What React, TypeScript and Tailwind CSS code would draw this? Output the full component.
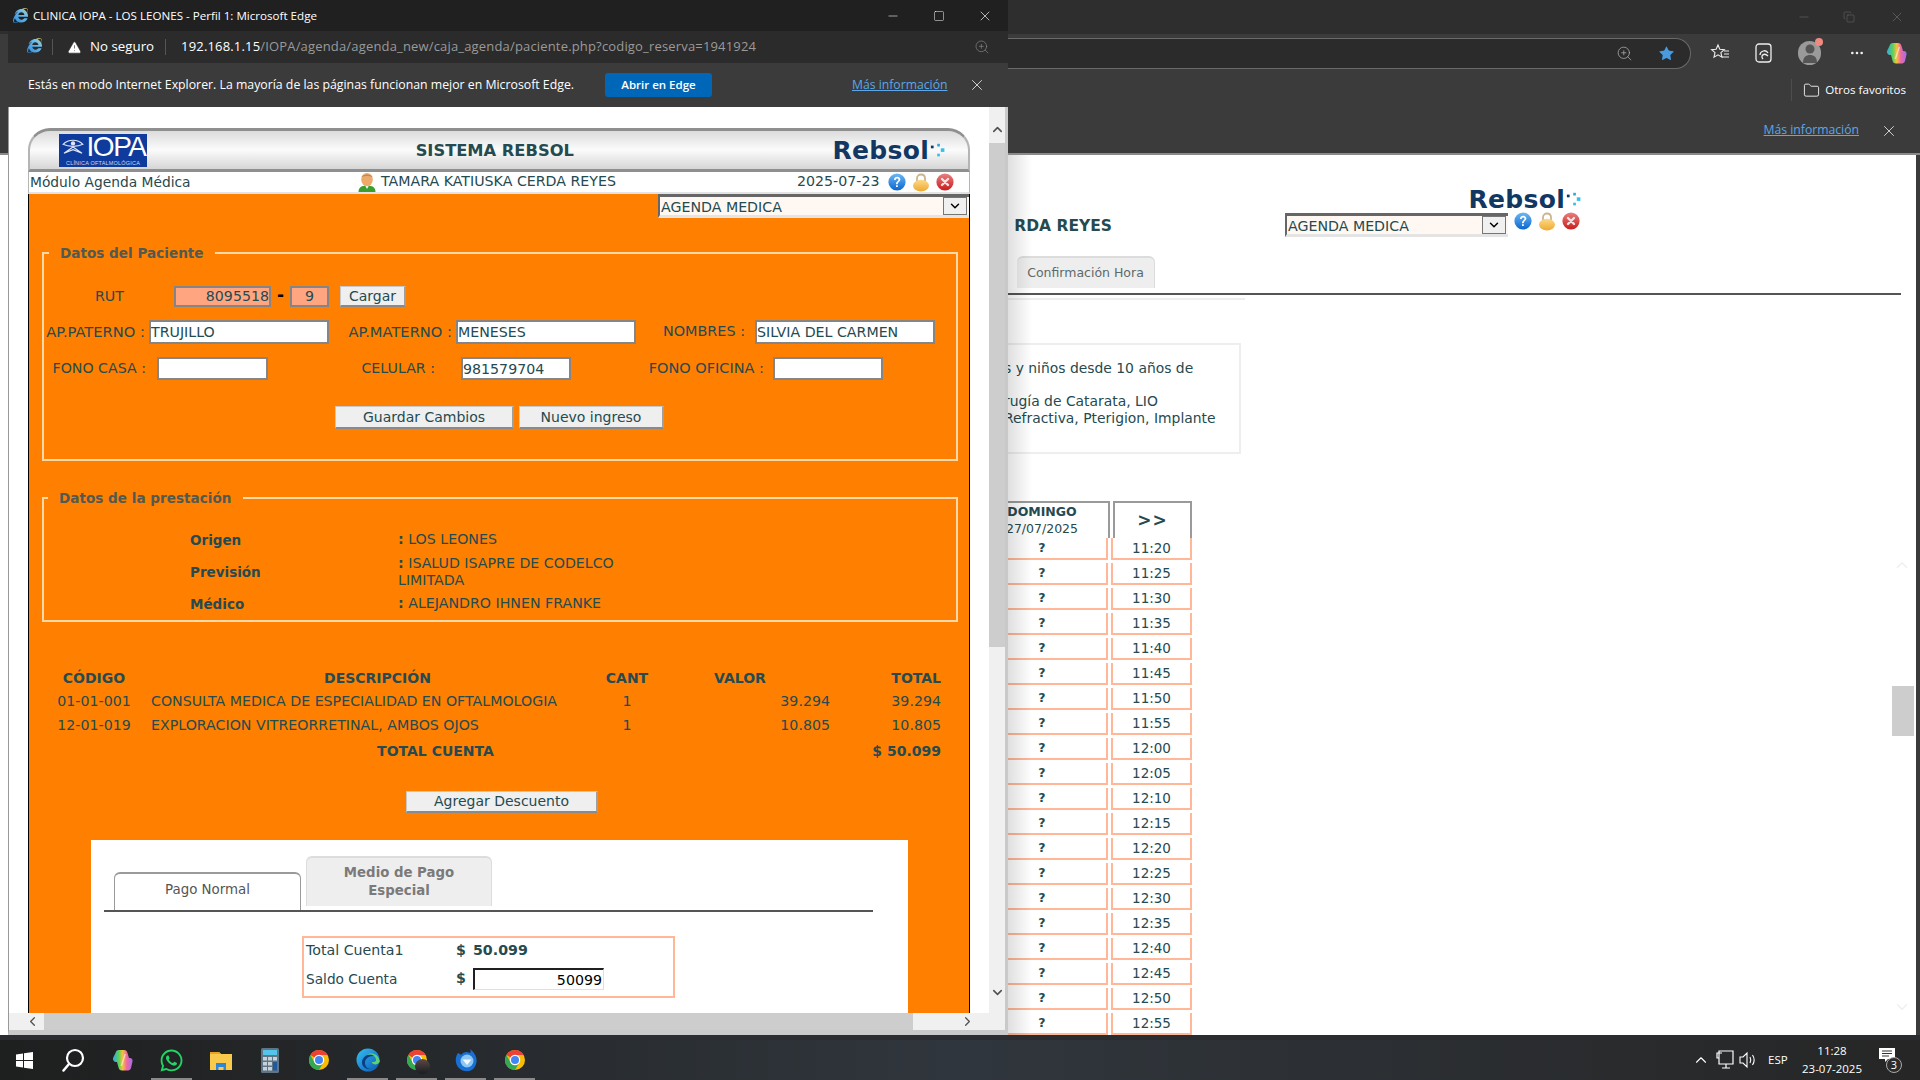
import React from "react";
import { FaInternetExplorer, FaWhatsapp } from "react-icons/fa";
import { ChevronUp, ChevronDown, ChevronLeft, ChevronRight, X, Minus, Square, ZoomIn, Star, TriangleAlert, Folder, MoreHorizontal, Copy } from "lucide-react";

const sans = "font-['DejaVu_Sans',sans-serif]";
const ui = "font-['Open_Sans','Noto_Sans',sans-serif]";

function IeIcon({ size = 16 }: { size?: number }) {
  return (
    <span className="relative inline-flex items-center justify-center shrink-0">
      <FaInternetExplorer size={size} className="fill-[url(#ieGrad)]" />
    </span>
  );
}

function Defs() {
  return (
    <svg width="0" height="0" className="absolute">
      <defs>
        <linearGradient id="ieGrad" x1="1" y1="0" x2="0" y2="1">
          <stop offset="0" stopColor="#f5b942" />
          <stop offset="0.3" stopColor="#6fc2ef" />
          <stop offset="1" stopColor="#2a86d8" />
        </linearGradient>
        <linearGradient id="helpG" x1="0" y1="0" x2="0" y2="1">
          <stop offset="0" stopColor="#6db9f5" />
          <stop offset="1" stopColor="#0a66d0" />
        </linearGradient>
        <linearGradient id="lockG" x1="0" y1="0" x2="0" y2="1">
          <stop offset="0" stopColor="#fbd98a" />
          <stop offset="1" stopColor="#f0a92e" />
        </linearGradient>
        <linearGradient id="closeG" x1="0" y1="0" x2="0" y2="1">
          <stop offset="0" stopColor="#e98080" />
          <stop offset="1" stopColor="#c91c1c" />
        </linearGradient>
        <linearGradient id="copG" x1="0" y1="0" x2="1" y2="0">
          <stop offset="0" stopColor="#2ea8e8" />
          <stop offset="0.3" stopColor="#5fd05a" />
          <stop offset="0.5" stopColor="#f7c23c" />
          <stop offset="0.7" stopColor="#ee6aa0" />
          <stop offset="1" stopColor="#a06cf0" />
        </linearGradient>
        <linearGradient id="edgeG" x1="0" y1="0" x2="1" y2="1">
          <stop offset="0" stopColor="#35c1f1" />
          <stop offset="0.6" stopColor="#1b80d0" />
          <stop offset="1" stopColor="#0c59a4" />
        </linearGradient>
      </defs>
    </svg>
  );
}

function HelpIco() {
  return (
    <svg width="18" height="18" viewBox="0 0 18 18" className="shrink-0">
      <circle cx="9" cy="9" r="8.6" fill="url(#helpG)" />
      <path d="M6 7c0-2 1.4-3.2 3.2-3.2S12.4 5 12.4 6.6c0 2-2.6 2.4-2.7 4.6H8c0-2.8 2.5-3 2.5-4.5 0-.8-.5-1.3-1.3-1.3-.9 0-1.5.6-1.500 1.600zM8 12.2h1.8V14H8z" fill="#fff" />
    </svg>
  );
}
function LockIco() {
  return (
    <svg width="18" height="19" viewBox="0 0 18 19" className="shrink-0">
      <path d="M5 9V5.500C5 3 6.800 1.500 9 1.500S13 3 13 5.500V9" fill="none" stroke="#c9b68c" strokeWidth="1.800" />
      <ellipse cx="9" cy="12.600" rx="8" ry="5.800" fill="url(#lockG)" />
    </svg>
  );
}
function CloseIco() {
  return (
    <svg width="18" height="18" viewBox="0 0 18 18" className="shrink-0">
      <circle cx="9" cy="9" r="8.600" fill="url(#closeG)" />
      <path d="M6 6l6 6M12 6l-6 6" stroke="#f4e4e4" strokeWidth="2.400" strokeLinecap="round" />
    </svg>
  );
}
function PersonIco() {
  return (
    <svg width="20" height="20" viewBox="0 0 20 20" className="shrink-0">
      <path d="M1.500 20c0-4.500 3-6.500 8.500-6.500s8.500 2 8.500 6.500z" fill="#3c9e2c" />
      <path d="M8 13.500h4L10 17z" fill="#f3f3f3" />
      <ellipse cx="10" cy="7.500" rx="5.800" ry="6.600" fill="#eeaa6a" />
      <path d="M4.500 5C5.500 1.500 14.500 1.500 15.500 5 12 3.500 8 3.500 4.500 5z" fill="#b98a5a" />
    </svg>
  );
}

function RebsolLogo() {
  return (
    <div className="flex items-center">
      <span className="font-['DejaVu_Sans',sans-serif] font-bold text-[25px] leading-[22px] tracking-[0.3px] text-[#123763]">Rebsol</span>
      <svg width="18" height="18" viewBox="0 0 20 18" className="ml-[1px]">
        <rect x="1" y="3" width="3" height="3" fill="#123763" />
        <rect x="8" y="1" width="3" height="3" fill="#31a8d8" />
        <rect x="12" y="6" width="4" height="4" fill="#35c0e8" />
        <rect x="8" y="12" width="3" height="3" fill="#35c0e8" />
      </svg>
    </div>
  );
}

function IopaLogo() {
  return (
    <div className="w-[88px] h-[33px] bg-[#0f3b9c] flex flex-col items-center">
      <div className="flex items-center h-[26px]">
        <svg width="24" height="18" viewBox="0 0 26 20">
          <path d="M2 7c6-6 16-6 22 0-6 3-16 3-22 0zM3 17l10-7 10 7-10-4z" fill="none" stroke="#dfe6f7" strokeWidth="1.300" />
          <circle cx="13" cy="6" r="2.400" fill="#dfe6f7" />
        </svg>
        <span className="font-['Liberation_Sans',sans-serif] text-[28px] leading-[26px] tracking-[-1.500px] text-white ml-[2px]">IOPA</span>
      </div>
      <span className="font-['Liberation_Sans',sans-serif] text-[5.500px] leading-[6px] tracking-[0.2px] text-[#cfd9f2] whitespace-nowrap">CLÍNICA OFTALMOLÓGICA</span>
    </div>
  );
}

function SelectBox({ w }: { w: string }) {
  return (
    <div className={`${w} h-[24px] bg-[#fff8f2] border-t-[3px] border-l-[2px] border-[#666] border-b-[3px] border-b-[#e4e4e4] flex items-center justify-between pl-[1px] pr-[2px]`}>
      <span className="text-[14.200px] leading-[16px] pt-[1px] text-[#254a50]">AGENDA MEDICA</span>
      <span className="w-[24px] h-[18px] bg-[#f0f0f0] border border-[#767676] flex items-center justify-center">
        <ChevronDown size={14} strokeWidth={2.500} className="text-black" />
      </span>
    </div>
  );
}

function Field({ w, v, h = "h-[24px]", cls = "" }: { w: string; v?: string; h?: string; cls?: string }) {
  return (
    <input
      readOnly
      value={v ?? ""}
      className={`${w} ${h} bg-white border-2 border-[#858585] px-0 text-[14.200px] text-[#254a50] outline-none ${cls}`}
    />
  );
}

function Btn({ w, children, h = "h-[23px]" }: { w: string; children: React.ReactNode; h?: string }) {
  return (
    <button className={`${w} ${h} bg-[#efefef] border border-[#c8c8c8] border-b-[2px] border-b-[#8a8a8a] border-r-[2px] border-r-[#a0a0a0] text-[14px] text-[#254a50] shrink-0 flex items-center justify-center`}>
      {children}
    </button>
  );
}

function Chrome() {
  return (
    <svg width="24" height="24" viewBox="0 0 48 48">
      <circle cx="24" cy="24" r="20" fill="#fbbc04" />
      <path d="M24 4A20 20 0 0 1 41.320 14H24A10 10 0 0 0 15.340 19L6.680 14A20 20 0 0 1 24 4Z" fill="#ea4335" />
      <path d="M6.680 14L15.340 29A10 10 0 0 0 32.660 29L24 44A20 20 0 0 1 6.680 14Z" fill="#34a853" />
      <circle cx="24" cy="24" r="10.500" fill="#fff" />
      <circle cx="24" cy="24" r="8" fill="#4285f4" />
    </svg>
  );
}

function CopilotIco({ s = 24 }: { s?: number }) {
  return (
    <svg width={s} height={s} viewBox="0 0 24 24">
      <path d="M8 2h5c2 0 3 1 3.500 3l1.500 5h1c1.500 0 3 1.500 2.500 3.500L20 20c-.5 2-2 2.500-4 2.500H11c-2 0-3-1-3.500-3L6 14H5c-2 0-3.500-2-3-4L4.500 5C5 3 6 2 8 2z" fill="url(#copG)" />
      <path d="M13.500 6l-4 12h1.500l4-12z" fill="#fff" opacity="0.55" />
    </svg>
  );
}

function EdgeIco() {
  return (
    <svg width="24" height="24" viewBox="0 0 24 24">
      <circle cx="12" cy="12" r="11.500" fill="url(#edgeG)" />
      <path d="M23.500 13c0-3-3-5-6.500-5-4.500 0-8 3-8 7 0 3 2.500 6 6 6 .5 0 1 0 1.500-.2C12 22 6 20 6 14.500 6 10 10 6.500 15 6.500 19 6.500 22 9 23.500 13z" fill="#0b3f80" />
      <path d="M23.500 12.500C23 8 19 5.500 15 5.500c-2 0-3.500.5-4.500 1.500 3-1 6-.5 8 1.500 1 1 1.500 2.200 1.500 3.500 0 1-1 2-2.500 2-1 0-1.500-.3-2-.6.5 2 2 3 4 3 2.500 0 4.500-2 4.500-3.900z" fill="#5fd07a" />
    </svg>
  );
}

function Slot({ c, on }: { c: React.ReactNode; on?: boolean }) {
  return (
    <div className="relative w-[49px] h-[40px] flex items-center justify-center shrink-0">
      {c}
      {on && <span className="absolute left-[4px] right-[4px] bottom-0 h-[2px] bg-[#8a8a8a]" />}
    </div>
  );
}

function Taskbar() {
  return (
    <div className="absolute left-0 right-0 bottom-0 h-[40px] bg-gradient-to-r from-[#1e1f1f] via-[#30363d] to-[#262626] flex items-center">
      <Slot c={<svg width="17" height="17" viewBox="0 0 17 17"><path d="M0 2.500L7 1.500V8H0zM8 1.300L17 0V8H8zM0 9H7V15.500L0 14.500zM8 9H17V17L8 15.700z" fill="#fff" /></svg>} />
      <Slot c={<svg width="23" height="24" viewBox="0 0 23 24"><circle cx="13" cy="10" r="8" fill="none" stroke="#fff" strokeWidth="2.200" /><path d="M7 16L1.500 22.500" stroke="#fff" strokeWidth="2.500" strokeLinecap="round" /></svg>} />
      <Slot c={<CopilotIco />} />
      <Slot on c={<FaWhatsapp size={25} className="text-[#25d366]" />} />
      <Slot c={<svg width="22" height="20" viewBox="0 0 22 20"><path d="M0 2h9l2 2h11v16H0z" fill="#f9c94c" /><path d="M0 2h9l2 2H0z" fill="#e3a526" /><path d="M6 13h10v7h-2.500v-3h-5v3H6z" fill="#2f86d6" /></svg>} />
      <Slot c={<svg width="18" height="25" viewBox="0 0 18 25"><rect width="18" height="25" rx="1.500" fill="#5f7585" /><rect x="2" y="2" width="14" height="5" fill="#53c4ea" /><g fill="#c7d3db"><rect x="2" y="9" width="4" height="3.500" /><rect x="7" y="9" width="4" height="3.500" /><rect x="2" y="14" width="4" height="3.500" /><rect x="7" y="14" width="4" height="3.500" /><rect x="2" y="19" width="4" height="3.500" /><rect x="7" y="19" width="4" height="3.500" /></g><rect x="12" y="14" width="4" height="8.500" fill="#1e5a9c" /><rect x="12" y="9" width="4" height="3.500" fill="#c7d3db" /></svg>} />
      <Slot c={<Chrome />} />
      <Slot on c={<EdgeIco />} />
      <Slot on c={<div className="relative w-[24px] h-[24px]"><Chrome /><span className="absolute left-[10px] top-[11px] w-[15px] h-[15px] rounded-full bg-gradient-to-b from-[#5a4a48] to-[#1c1c20]" /></div>} />
      <Slot on c={<svg width="24" height="25" viewBox="0 0 24 25"><path d="M4 5C1 9 1 15 4 19c4 5 12 6 16 1 3-4 3-8 2-11-1-3-3-6-6-8 1 2 1 3 0 4C13 3 9 4 7 7 6 6 5 5 4 5z" fill="#1a6fd0" /><circle cx="13" cy="13" r="6.500" fill="#8cc6f5" /><path d="M8.500 11.500h9L13 17z" fill="#f2f8fe" /></svg>} />
      <Slot on c={<Chrome />} />
      <div className="ml-auto flex items-center text-white h-full">
        <ChevronUp size={18} strokeWidth={1.500} className="mr-[6px]" />
        <svg width="18" height="20" viewBox="0 0 18 20" className="mr-[5px]"><path d="M3 1h14v13H3zM3 1v7H1V3h5M10 14v4M6 18h8" fill="none" stroke="#fff" strokeWidth="1.200" /></svg>
        <svg width="18" height="18" viewBox="0 0 18 18" className="mr-[11px]"><path d="M1 6h3l4-4v14l-4-4H1zM11 6c1 2 1 4 0 6M13.500 4c2 3 2 7 0 10" fill="none" stroke="#fff" strokeWidth="1.100" /></svg>
        <span className={`${ui} text-[11.500px] w-[26px]`}>ESP</span>
        <div className={`${ui} text-[11.500px] leading-[18px] text-center ml-[8px] w-[60px]`}>
          <div>11:28</div>
          <div>23-07-2025</div>
        </div>
        <div className="relative ml-[12px] mr-[20px] w-[26px] h-[30px]">
          <svg width="17" height="15" viewBox="0 0 17 15" className="absolute left-[5px] top-[3px]"><path d="M0 0h16v11H9l-3 3v-3H0z" fill="#fff" /><path d="M3 3h10M3 5.500h10M3 8h7" stroke="#333" strokeWidth="1" /></svg>
          <span className={`${ui} absolute left-[12px] top-[12px] w-[16px] h-[16px] rounded-full bg-[#2c2c2c] border border-[#aaa] text-[11px] leading-[14px] text-center`}>3</span>
        </div>
      </div>
    </div>
  );
}

function BackWindow() {
  const times = ["11:20","11:25","11:30","11:35","11:40","11:45","11:50","11:55","12:00","12:05","12:10","12:15","12:20","12:25","12:30","12:35","12:40","12:45","12:50","12:55"];
  return (
    <div className={`absolute left-0 top-0 w-[1920px] h-[1035px] bg-[#3b3b3b] flex flex-col ${ui}`}>
      <div className="h-[34px] bg-[#2e2e2e] flex items-center justify-end text-[#6d6d6d] shrink-0">
        <Minus size={14} strokeWidth={1} className="mr-[32px]" />
        <Copy size={12} strokeWidth={1} className="mr-[34px]" />
        <X size={16} strokeWidth={1} className="mr-[15px]" />
      </div>
      <div className="h-[38px] flex items-center shrink-0">
        <div className="ml-[1000px] w-[691px] h-[31px] bg-[#2b2b2b] border border-[#6a6a6a] border-l-0 rounded-r-[16px] flex items-center justify-end">
          <ZoomIn size={17} strokeWidth={1} className="text-[#b8b8b8] mr-[25px]" />
          <Star size={17} fill="#4a9ae0" strokeWidth={0} className="mr-[15px]" />
        </div>
        <svg width="20" height="20" viewBox="0 0 20 20" className="ml-[19px]"><path d="M8 2l1.800 4.300 4.500.4-3.400 3 1 4.500L8 11.800 4 14.200l1-4.500-3.400-3 4.500-.4z" fill="none" stroke="#eee" strokeWidth="1.100" /><path d="M14 8h5M14 11h5M12 14h7" stroke="#eee" strokeWidth="1.100" /></svg>
        <svg width="18" height="20" viewBox="0 0 18 20" className="ml-[25px]"><rect x="1" y="1" width="15" height="18" rx="3" fill="none" stroke="#eee" strokeWidth="1.300" /><path d="M5 12c0-4 6-6 8-2M8 16c-3-3 1-7 5-3" fill="none" stroke="#eee" strokeWidth="1.300" /></svg>
        <div className="relative ml-[25px] w-[23px] h-[24px] rounded-full bg-[#9a9a9a] flex items-center justify-center">
          <svg width="14" height="20" viewBox="0 0 14 20"><circle cx="7" cy="6" r="4.500" fill="#555" /><path d="M0 20c0-6 3-8 7-8s7 2 7 8z" fill="#555" /></svg>
          <span className="absolute right-[-2px] top-[-3px] w-[8px] h-[8px] rounded-full bg-[#f08a80]" />
        </div>
        <MoreHorizontal size={16} className="text-[#eee] ml-[28px]" />
        <div className="ml-[20px]"><CopilotIco /></div>
      </div>
      <div className="h-[36px] flex items-center justify-end shrink-0">
        <div className="w-[1px] h-[22px] bg-[#4e4e4e] mr-[11px]" />
        <Folder size={17} strokeWidth={1.200} className="text-white mr-[5px]" />
        <span className="text-[11.600px] text-white mr-[14px]">Otros favoritos</span>
      </div>
      <div className="h-[47px] flex items-center justify-end shrink-0 border-b-[2px] border-[#8a8a8a]">
        <span className="text-[12.200px] text-[#5ba7e7] underline mr-[21px] pb-[1px]">Más información</span>
        <X size={18} strokeWidth={1} className="text-white mr-[22px]" />
      </div>
      <div className={`flex-1 bg-white min-h-0 overflow-hidden relative mr-[4px] ${sans} text-[#254a50]`}>
        <div className="h-[58px] flex justify-end pr-[332px] items-end pb-[2px]">
          <RebsolLogo />
        </div>
        <div className="flex items-start h-[28px]">
          <span className="w-[1112px] text-right font-bold text-[15.500px] leading-[26px]">RDA REYES</span>
          <div className="ml-[173px]"><SelectBox w="w-[223px]" /></div>
          <div className="flex gap-[6px] ml-[6px] -mt-[1px]"><HelpIco /><LockIco /><CloseIco /></div>
        </div>
        <div className="flex items-end h-[47px] pl-[1017px]">
          <div className="w-[138px] h-[32px] bg-[#eeeeee] rounded-t-[6px] border-t-2 border-r border-[#dcdcdc] text-[12.500px] text-[#5d6a6a] flex items-center justify-center">Confirmación Hora</div>
        </div>
        <div className="h-[2px] bg-[#555] mt-[5px] ml-[1000px] w-[901px]" />
        <div className="h-[2px] bg-[#eeeeee] mt-[3px] ml-[1000px] w-[245px]" />
        <div className="mt-[43px] ml-[1000px] w-[241px] h-[111px] border-2 border-l-0 border-[#eeeeee] pl-[4px] pt-[15px] text-[13.900px] leading-[17px]">
          <div>s y niños desde 10 años de</div>
          <div className="mt-[16px]">rugía de Catarata, LIO</div>
          <div>Refractiva, Pterigion, Implante</div>
        </div>
        <div className="mt-[47px] ml-[1000px] w-[192px] flex justify-end gap-[3px]">
          <div className="w-[110px] h-[37px] border-t-2 border-r-2 border-[#9a9a9a] text-center text-[12.500px] leading-[17px] pt-[0px]">
            <div className="font-bold -ml-[24px]">DOMINGO</div>
            <div className="-ml-[24px]">27/07/2025</div>
          </div>
          <div className="w-[79px] h-[37px] border-t-2 border-l-2 border-r-2 border-[#9a9a9a] flex items-center justify-center font-bold text-[17px] tracking-[1px]">&gt;&gt;</div>
        </div>
        <div className="ml-[1000px] w-[192px] flex flex-col">
          {times.map((t) => (
            <div key={t} className="flex h-[25px] gap-[3px] justify-end">
              <div className="w-[108px] h-[22px] border-2 border-l-0 border-t-0 border-[#ffb797] text-center font-bold text-[12.500px] leading-[20px] text-[#254a50] pr-[22px]">?</div>
              <div className="w-[81px] h-[22px] border-2 border-t-0 border-[#ffb797] text-center text-[13.500px] leading-[20px]">{t}</div>
            </div>
          ))}
        </div>
        <div className="absolute left-[1892px] top-[531px] w-[22px] h-[50px] bg-[#cdcdcd]" />
        <ChevronUp size={18} className="absolute left-[1893px] top-[401px] text-[#efefef]" />
        <ChevronDown size={18} className="absolute left-[1893px] top-[843px] text-[#efefef]" />
      </div>
      <div className="absolute left-[1008px] top-[155px] bottom-0 w-[24px] bg-gradient-to-r from-[#00000020] to-transparent" />
    </div>
  );
}

function FrontWindow() {
  return (
    <div className={`absolute left-0 top-0 w-[1008px] h-[1035px] flex flex-col ${ui}`}>
      <div className="h-[31px] bg-[#202020] flex items-center text-white shrink-0">
        <div className="ml-[12px] w-[16px] flex justify-center"><IeIcon size={15} /></div>
        <span className="ml-[5px] w-[555px] text-[11.600px] whitespace-nowrap">CLINICA IOPA - LOS LEONES - Perfil 1: Microsoft Edge</span>
        <Minus size={14} strokeWidth={1} className="ml-[298px]" />
        <Square size={12} strokeWidth={1} className="ml-[33px]" />
        <X size={16} strokeWidth={1} className="ml-[32px]" />
      </div>
      <div className="h-[32px] bg-[#2b2b2b] flex items-center ml-[8px] shrink-0 text-white">
        <div className="ml-[19px]"><IeIcon size={15} /></div>
        <div className="w-[1px] h-[16px] bg-[#555] ml-[10px]" />
        <TriangleAlert size={15} fill="#fff" strokeWidth={1} className="ml-[14px] text-[#2b2b2b]" />
        <span className="ml-[8px] text-[13.300px] whitespace-nowrap">No seguro</span>
        <div className="w-[1px] h-[16px] bg-[#555] ml-[11px]" />
        <span className="ml-[15px] w-[574px] text-[13px] tracking-[0.17px] whitespace-nowrap">192.168.1.15<span className="text-[#9a9a9a]">/IOPA/agenda/agenda_new/caja_agenda/paciente.php?codigo_reserva=1941924</span></span>
        <ZoomIn size={16} strokeWidth={1} className="ml-[219px] text-[#8a8a8a]" />
      </div>
      <div className="h-[44px] bg-[#3b3b3b] flex items-center ml-[8px] shrink-0 text-white">
        <span className="ml-[20px] w-[545px] text-[12.300px] whitespace-nowrap">Estás en modo Internet Explorer. La mayoría de las páginas funcionan mejor en Microsoft Edge.</span>
        <span className="ml-[32px] w-[107px] h-[24px] rounded-[3px] bg-[#0067b8] text-[11.500px] font-semibold flex items-center justify-center shrink-0">Abrir en Edge</span>
        <span className="ml-[140px] w-[96px] text-[12.200px] text-[#5ba7e7] underline whitespace-nowrap">Más información</span>
        <X size={18} strokeWidth={1} className="ml-[20px]" />
      </div>
      <div className="flex-1 min-h-0 ml-[8px] flex flex-col bg-[#f0f0f0] border-b-[5px] border-[#c9c9c9] border-r-[3px] border-l-[1px] border-l-[#999]">
        <div className="flex-1 min-h-0 flex">
          <div className={`flex-1 min-w-0 bg-white overflow-hidden pl-[19px] pt-[21px] ${sans} text-[#254a50] text-[14.200px]`}>
            <Header />
            <Orange />
          </div>
          <div className="w-[16px] h-full bg-[#f0f0f0] flex flex-col items-center shrink-0">
            <div className="h-[36px] flex items-end justify-center pb-[6px]"><ChevronUp size={15} strokeWidth={2.500} className="text-[#505050]" /></div>
            <div className="w-full h-[504px] bg-[#cdcdcd]" />
            <div className="mt-auto h-[38px] flex items-center justify-center pb-[4px]"><ChevronDown size={15} strokeWidth={2.500} className="text-[#505050]" /></div>
          </div>
        </div>
        <div className="h-[17px] bg-[#f0f0f0] flex items-center shrink-0">
          <div className="w-[35px] flex justify-center pl-[12px]"><ChevronLeft size={15} strokeWidth={2} className="text-[#505050]" /></div>
          <div className="w-[869px] h-full bg-[#cdcdcd]" />
          <div className="ml-[39px] w-[30px] flex justify-center"><ChevronRight size={15} strokeWidth={2} className="text-[#505050]" /></div>
        </div>
      </div>
    </div>
  );
}

function Header() {
  return (
    <div>
      <div className="h-[44px] w-[942px] rounded-t-[22px] border-t-[3px] border-x-[2px] border-b-[3px] border-[#8f8f8f] border-x-[#b5b5b5] bg-gradient-to-b from-[#dcdcdc] via-[#fbfbfb] to-[#d6d6d6] flex items-center justify-between pl-[29px] pr-[20px]">
        <IopaLogo />
        <span className="font-bold text-[16.300px] ml-[10px] pt-[3px] text-[#254a50] whitespace-nowrap">SISTEMA REBSOL</span>
        <div className="pt-[2px]"><RebsolLogo /></div>
      </div>
      <div className="h-[22px] w-[942px] bg-white border-b-[2px] border-[#e3e3e3] border-x border-x-[#b5b5b5] flex items-center">
        <span className="ml-[1px] w-[327px] text-[13.800px] pt-[1px] whitespace-nowrap">Módulo Agenda Médica</span>
        <PersonIco />
        <span className="ml-[4px] w-[416px] whitespace-nowrap">TAMARA KATIUSKA CERDA REYES</span>
        <span className="w-[83px] whitespace-nowrap">2025-07-23</span>
        <div className="flex gap-[6px] ml-[8px]"><HelpIco /><LockIco /><CloseIco /></div>
      </div>
    </div>
  );
}

function FieldsetBox({ legend, lpad, children }: { legend: string; lpad: string; children: React.ReactNode }) {
  return (
    <fieldset className="ml-[13px] w-[916px] border-[2px] border-[#ffd9a8]">
      <legend className={`${lpad} px-[11px] font-bold text-[13.600px] leading-[18px] text-[#515a50]`}>{legend}</legend>
      {children}
    </fieldset>
  );
}

function Orange() {
  return (
    <div className="w-[942px] h-[900px] bg-[#ff8000] border-x border-x-black">
      <div className="flex justify-end"><SelectBox w="w-[311px]" /></div>
      <div className="h-[26px]" />
      <FieldsetBox legend="Datos del Paciente" lpad="ml-[5px]">
        <div className="h-[24px]" />
        <div className="flex items-center h-[21px]">
          <span className="w-[130px] pl-[51px]">RUT</span>
          <Field w="w-[97px]" h="h-[21px]" v="8095518" cls="!bg-[#ffa680] text-right" />
          <span className="w-[19px] text-center font-bold text-black text-[17px] leading-[17px] pb-[2px]">-</span>
          <Field w="w-[39px]" h="h-[21px]" v="9" cls="!bg-[#ffa680] text-center" />
          <div className="ml-[11px]"><Btn w="w-[66px]" h="h-[21px]">Cargar</Btn></div>
        </div>
        <div className="flex items-center h-[24px] mt-[13px]">
          <span className="w-[101px] text-right whitespace-nowrap mr-[4px] text-[14.700px]">AP.PATERNO :</span>
          <Field w="w-[180px]" v="TRUJILLO" />
          <span className="w-[123px] text-right whitespace-nowrap mr-[4px] text-[14.700px]">AP.MATERNO :</span>
          <Field w="w-[180px]" v="MENESES" />
          <span className="w-[109px] text-right whitespace-nowrap mr-[10px] text-[14.400px]">NOMBRES :</span>
          <Field w="w-[180px]" v="SILVIA DEL CARMEN" />
        </div>
        <div className="flex items-center h-[23px] mt-[13px]">
          <span className="w-[102px] text-right whitespace-nowrap mr-[11px]">FONO CASA :</span>
          <Field w="w-[111px]" h="h-[23px]" />
          <span className="w-[167px] text-right whitespace-nowrap mr-[26px]">CELULAR :</span>
          <Field w="w-[110px]" h="h-[23px]" v="981579704" />
          <span className="w-[193px] text-right whitespace-nowrap mr-[9px] text-[14.500px]">FONO OFICINA :</span>
          <Field w="w-[110px]" h="h-[23px]" />
        </div>
        <div className="flex ml-[291px] gap-[5px] mt-[26px] mb-[30px]">
          <Btn w="w-[179px]">Guardar Cambios</Btn>
          <Btn w="w-[145px]">Nuevo ingreso</Btn>
        </div>
      </FieldsetBox>
      <div className="h-[28px]" />
      <FieldsetBox legend="Datos de la prestación" lpad="ml-[4px]">
        <div className="h-[24px]" />
        <div className="flex items-center h-[18px] pl-[146px]">
          <span className="w-[208px] font-bold text-[13.500px]">Origen</span>
          <span><b>:</b> LOS LEONES</span>
        </div>
        <div className="flex items-center h-[34px] mt-[6px] pl-[146px]">
          <span className="w-[208px] font-bold text-[13.500px]">Previsión</span>
          <span className="leading-[17px]"><b>:</b> ISALUD ISAPRE DE CODELCO<br />LIMITADA</span>
        </div>
        <div className="flex items-center h-[18px] mt-[6px] mb-[7px] pl-[146px]">
          <span className="w-[208px] font-bold text-[13.500px]">Médico</span>
          <span><b>:</b> ALEJANDRO IHNEN FRANKE</span>
        </div>
      </FieldsetBox>
      <table className="ml-[18px] mt-[44px] w-[894px] table-fixed">
        <colgroup>
          <col className="w-[94px]" />
          <col className="w-[463px]" />
          <col className="w-[46px]" />
          <col className="w-[180px]" />
          <col className="w-[111px]" />
        </colgroup>
        <thead>
          <tr className="h-[24px] font-bold text-[14px]">
            <th>CÓDIGO</th>
            <th className="pl-[10px]">DESCRIPCIÓN</th>
            <th>CANT</th>
            <th>VALOR</th>
            <th className="text-right">TOTAL</th>
          </tr>
        </thead>
        <tbody>
          <tr className="h-[24px]">
            <td className="text-center">01-01-001</td>
            <td className="pl-[10px] whitespace-nowrap">CONSULTA MEDICA DE ESPECIALIDAD EN OFTALMOLOGIA</td>
            <td className="text-center">1</td>
            <td className="text-right">39.294</td>
            <td className="text-right">39.294</td>
          </tr>
          <tr className="h-[24px]">
            <td className="text-center">12-01-019</td>
            <td className="pl-[10px] whitespace-nowrap">EXPLORACION VITREORRETINAL, AMBOS OJOS</td>
            <td className="text-center">1</td>
            <td className="text-right">10.805</td>
            <td className="text-right">10.805</td>
          </tr>
          <tr className="h-[26px] font-bold text-[14px]">
            <td colSpan={4} className="text-center pr-[6px]">TOTAL CUENTA</td>
            <td className="text-right">$ 50.099</td>
          </tr>
        </tbody>
      </table>
      <div className="ml-[377px] mt-[27px]"><Btn w="w-[192px]" h="h-[22px]">Agregar Descuento</Btn></div>
      <div className="ml-[62px] mt-[27px] w-[817px] h-[200px] bg-white pt-[16px]">
        <div className="flex items-start ml-[23px] gap-[5px] h-[54px]">
          <div className="mt-[16px] w-[187px] h-[38px] rounded-t-[6px] border-t-2 border-x border-[#9a9a9a] flex items-center justify-center pb-[3px] text-[13.400px] text-[#555]">Pago Normal</div>
          <div className="w-[186px] h-[50px] rounded-t-[6px] bg-[#eeeeee] border-t-2 border-x border-[#dcdcdc] flex items-center justify-center text-center font-bold text-[13.300px] leading-[18px] text-[#7a7a7a]">Medio de Pago<br />Especial</div>
        </div>
        <div className="ml-[13px] w-[769px] h-[2px] bg-[#555]" />
        <div className="ml-[211px] mt-[24px] w-[373px] h-[62px] border-2 border-[#ffb797] pl-[2px]">
          <div className="flex items-center h-[26px]">
            <span className="w-[150px]">Total Cuenta1</span>
            <span className="font-bold w-[17px]">$</span>
            <span className="font-bold">50.099</span>
          </div>
          <div className="flex items-center h-[26px] mt-[2px]">
            <span className="w-[150px] text-[13.700px]">Saldo Cuenta</span>
            <span className="font-bold w-[17px]">$</span>
            <input readOnly value="50099" className="w-[131px] h-[22px] border border-[#e0e0e0] border-t-[2px] border-l-[2px] border-t-[#202020] border-l-[#202020] text-right text-black outline-none pr-[1px]" />
          </div>
        </div>
      </div>
    </div>
  );
}

export default function App() {
  return (
    <div className="relative w-[1920px] h-[1080px] overflow-hidden bg-[#2a2c2f]">
      <Defs />
      <BackWindow />
      <FrontWindow />
      <Taskbar />
    </div>
  );
}
